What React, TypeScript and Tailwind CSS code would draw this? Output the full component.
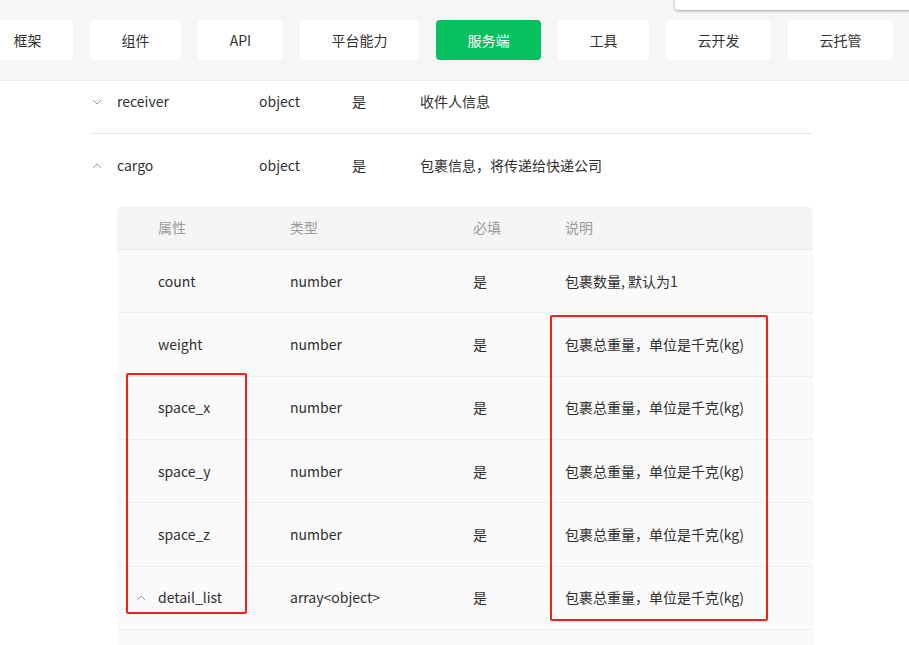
import React from "react";

const font = { fontFamily: '"Noto Sans CJK SC", "Noto Sans", sans-serif' };

function Chevron({ up }: { up?: boolean }) {
  return (
    <svg width="10" height="6" viewBox="0 0 10 6" className="shrink-0">
      {up ? (
        <polyline points="1,5 5,1 9,5" fill="none" stroke="#9a9a9a" strokeWidth="1" />
      ) : (
        <polyline points="1,1 5,5 9,1" fill="none" stroke="#9a9a9a" strokeWidth="1" />
      )}
    </svg>
  );
}

const navItems: { label: string; w: string; active?: boolean }[] = [
  { label: "框架", w: "w-[91px]" },
  { label: "组件", w: "w-[91px]" },
  { label: "API", w: "w-[85px]" },
  { label: "平台能力", w: "w-[119px]" },
  { label: "服务端", w: "w-[105px]", active: true },
  { label: "工具", w: "w-[91px]" },
  { label: "云开发", w: "w-[105px]" },
  { label: "云托管", w: "w-[105px]" },
];

const rows = [
  { name: "count", type: "number", desc: "包裹数量, 默认为1" },
  { name: "weight", type: "number", desc: "包裹总重量，单位是千克(kg)" },
  { name: "space_x", type: "number", desc: "包裹总重量，单位是千克(kg)" },
  { name: "space_y", type: "number", desc: "包裹总重量，单位是千克(kg)" },
  { name: "space_z", type: "number", desc: "包裹总重量，单位是千克(kg)" },
  { name: "detail_list", type: "array<object>", desc: "包裹总重量，单位是千克(kg)", chevron: true },
];

export default function App() {
  return (
    <div className="relative w-[909px] h-[645px] overflow-hidden bg-white text-[14px] text-[#2f2f2f]" style={font}>
      {/* nav */}
      <div className="h-[81px] bg-[#f6f6f6] border-b border-[#ececec] pt-5">
        <div className="flex gap-[17px] ml-[-18px]">
          {navItems.map((n) => (
            <div
              key={n.label}
              className={`${n.w} h-10 shrink-0 rounded-[4px] flex items-center justify-center ${
                n.active ? "bg-[#07c160] text-white" : "bg-white text-[#333]"
              }`}
            >
              {n.label}
            </div>
          ))}
        </div>
      </div>

      {/* dropdown overlay at top right */}
      <div className="absolute left-[675px] top-[-20px] w-[240px] h-[30px] bg-white rounded-bl-[3px] shadow-[0_1px_3px_rgba(0,0,0,0.35)]" />

      {/* outer rows */}
      <div className="ml-[90px] w-[723px]">
        <div className="h-[53px] pb-[11px] flex items-center border-b border-[#e8e8e8]">
          <div className="w-[27px] flex pl-[2px]">
            <Chevron />
          </div>
          <div className="w-[142px]">receiver</div>
          <div className="w-[93px]">object</div>
          <div className="w-[68px]">是</div>
          <div>收件人信息</div>
        </div>
        <div className="h-[63px] flex items-center">
          <div className="w-[27px] flex pl-[2px]">
            <Chevron up />
          </div>
          <div className="w-[142px]">cargo</div>
          <div className="w-[93px]">object</div>
          <div className="w-[68px]">是</div>
          <div>包裹信息，将传递给快递公司</div>
        </div>

        {/* nested table */}
        <div className="mt-[9px] ml-[27px] w-[696px]">
          <div className="h-[44px] bg-[#f5f5f5] rounded-t-[8px] flex items-center border-b border-[#ececec] text-[#9b9b9b]">
            <div className="w-[173px] pl-[41px]">属性</div>
            <div className="w-[183px]">类型</div>
            <div className="w-[92px]">必填</div>
            <div>说明</div>
          </div>
          {rows.map((r) => (
            <div key={r.name} className="h-[63.33px] bg-[#fafafa] flex items-center border-b border-[#efefef]">
              <div className="w-[41px] flex pl-[19px]">{r.chevron ? <Chevron up /> : null}</div>
              <div className="w-[132px]">{r.name}</div>
              <div className="w-[183px]">{r.type}</div>
              <div className="w-[92px]">是</div>
              <div>{r.desc}</div>
            </div>
          ))}
          <div className="h-[40px] bg-[#fafafa]" />
        </div>
      </div>

      {/* red annotation boxes */}
      <div className="absolute left-[126px] top-[373px] w-[121px] h-[241px] border-2 border-[#f5201c] rounded-[2px]" />
      <div className="absolute left-[550px] top-[315px] w-[218px] h-[306px] border-2 border-[#f5201c] rounded-[2px]" />
    </div>
  );
}
